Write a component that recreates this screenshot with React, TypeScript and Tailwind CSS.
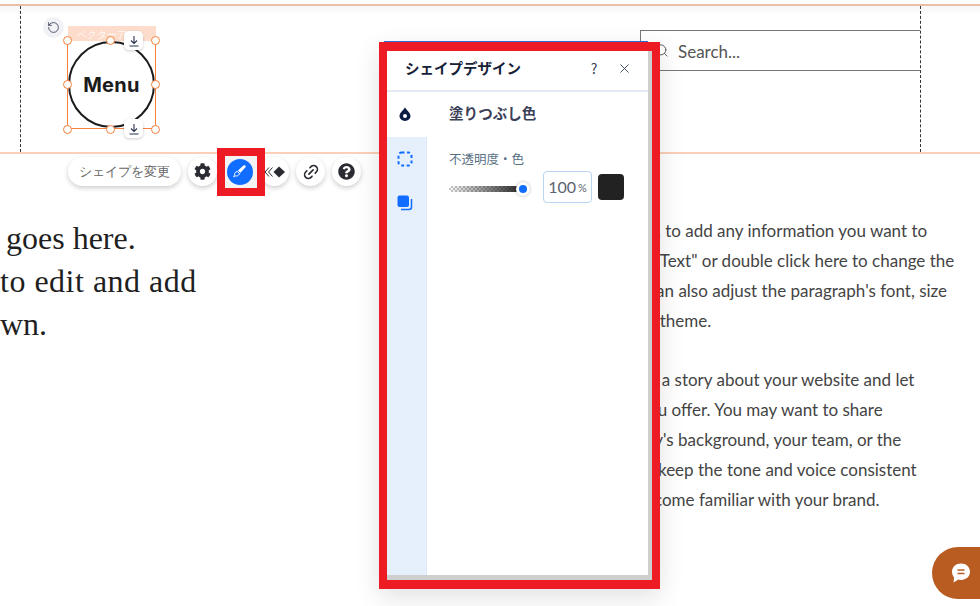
import { Link2, RotateCcw, Search, X } from "lucide-react";
import { FaCog, FaQuestionCircle } from "react-icons/fa";

const bodyLines = [
  { text: "e, to add any information you want to", indent: "" },
  { text: "t \"Text\" or double click here to change the", indent: "-ml-[5px]" },
  { text: "can also adjust the paragraph's font, size", indent: "" },
  { text: "s theme.", indent: "" },
];

const storyLines = [
  { text: "s a story about your website and let", indent: "pl-[2px]" },
  { text: "ou offer. You may want to share", indent: "" },
  { text: "ny's background, your team, or the", indent: "-ml-[3px]" },
  { text: "o keep the tone and voice consistent", indent: "-ml-[4px]" },
  { text: "come familiar with your brand.", indent: "pl-[6px]" },
];

const handles = [
  "left-[-5px] top-[-5px]",
  "left-[38px] top-[-5px]",
  "left-[83px] top-[-5px]",
  "left-[-5px] top-[39px]",
  "left-[83px] top-[39px]",
  "left-[-5px] top-[84px]",
  "left-[38px] top-[84px]",
  "left-[83px] top-[84px]",
];

function SaveIcon() {
  return (
    <svg width="12" height="12" viewBox="0 0 12 12" fill="none" stroke="#2b3350" strokeWidth="1.1">
      <path d="M6 1v7M3 5.500 6 8.500l3-3M1.500 11h9" />
    </svg>
  );
}

function SelectedShape() {
  return (
    <div className="absolute left-[67px] top-[40px] h-[89px] w-[89px] border border-[#f5813c]">
      <div className="absolute left-0 top-[-15px] flex h-[15px] w-[88px] items-center justify-center bg-[#fddccb] text-[10px] leading-none text-white/80">
        ベクターアート
      </div>
      <div className="flex h-full w-full items-center justify-center rounded-full border-2 border-[#1b1b1b] bg-white">
        <span className="[font-family:Inter,sans-serif] text-[20px] font-bold leading-none tracking-[0.3px] text-[#1b1b1b]">
          Menu
        </span>
      </div>
      {handles.map((h) => (
        <span key={h} className={`absolute h-[9px] w-[9px] rounded-full border-[1.5px] border-[#f5813c] bg-white ${h}`} />
      ))}
      <button className="absolute left-[-25px] top-[-24px] flex h-[21px] w-[21px] items-center justify-center rounded-full bg-[#f1f2f6] text-[#3b4057]">
        <RotateCcw size={13} strokeWidth={1.6} />
      </button>
      <span className="absolute left-[56px] top-[-10px] flex h-[19px] w-[19px] items-center justify-center rounded-[5px] bg-white shadow-[0_1px_3px_rgba(0,0,0,0.2)]">
        <SaveIcon />
      </span>
      <span className="absolute left-[56px] top-[78px] flex h-[19px] w-[19px] items-center justify-center rounded-[5px] bg-white shadow-[0_1px_3px_rgba(0,0,0,0.2)]">
        <SaveIcon />
      </span>
    </div>
  );
}

function Toolbar() {
  const round =
    "flex h-[29px] w-[29px] items-center justify-center rounded-full bg-white text-[#2b2b33] shadow-[0_2px_5px_rgba(0,0,0,0.2)]";
  return (
    <div className="absolute left-[68px] top-[157px] flex items-center gap-[7px]">
      <div className="flex h-[29px] w-[113px] items-center justify-center rounded-full bg-white text-[13px] text-[#666] shadow-[0_2px_5px_rgba(0,0,0,0.2)]">
        シェイプを変更
      </div>
      <button className={round}>
        <FaCog size={17} />
      </button>
      <button className={round}>
        <span />
      </button>
      <button className={round}>
        <svg width="22" height="12" viewBox="0 0 22 12">
          <path d="M5 1.500 1 6l4 4.500M8.500 1.500 4.500 6l4 4.500" fill="none" stroke="#2b2b33" strokeWidth="1" />
          <path d="M15 .500 21 6l-6 5.500L9.500 6Z" fill="#2b2b33" />
        </svg>
      </button>
      <button className={round}>
        <Link2 size={18} strokeWidth={2.2} className="-rotate-45" />
      </button>
      <button className={round}>
        <FaQuestionCircle size={17} />
      </button>
    </div>
  );
}

function BrushHighlight() {
  return (
    <div className="absolute left-[217px] top-[148px] h-[48px] w-[48px] border-[8px] border-[#ed1c24] bg-[#f3f3f3]">
      <div className="flex h-full w-full items-center justify-center pb-[1px] pr-[3px]">
        <span className="flex h-[26px] w-[26px] items-center justify-center rounded-full bg-[#116dff]">
          <svg width="15" height="15" viewBox="0 0 17 17">
            <path d="M15 1.600c.9.600.7 1.600 0 2.500L9.600 10 6.800 7.500 12.600 2c.8-.7 1.600-.9 2.400-.4Z" fill="#fff" />
            <path d="M6 8.300 8.900 11l-1.500 1.600c-1 1-2.300 1.200-3.400.9l-1.600 1.200-.6-.6L3 12.600c-.3-1.200 0-2.300 1-3.200Z" fill="none" stroke="#fff" strokeWidth="1.100" />
          </svg>
        </span>
      </div>
    </div>
  );
}

function DesignPanel() {
  return (
    <div className="absolute left-[379px] top-[41px] w-[281px]">
      <div className="ml-[5px] mr-[12px] h-[2px] bg-[#2f6fe0]" />
      <div className="-mt-px h-[547px] w-[281px] border-x-[8px] border-y-[9px] border-[#ed1c24] bg-[#cfcfcf] shadow-[0_8px_24px_rgba(0,0,0,0.12)]">
        <div className="flex h-[524px] w-[261px] flex-col bg-white [font-family:'Noto_Sans_CJK_JP',sans-serif]">
          <div className="flex h-[41px] shrink-0 items-center border-b-2 border-[#e4eaf3] pb-[5px] pl-[18px]">
            <span className="text-[14.500px] font-semibold text-[#162138]">シェイプデザイン</span>
            <span className="ml-[66px] w-[14px] text-center text-[14px] text-[#3b4057]">?</span>
            <X size={15} strokeWidth={1.4} className="ml-[16px] text-[#2b3350]" />
          </div>
          <div className="flex flex-1">
            <div className="flex w-[40px] shrink-0 flex-col">
              <div className="flex h-[45px] items-center justify-center pb-[2px] pr-[4px]">
                <svg width="12" height="14" viewBox="0 0 12 14">
                  <path d="M6 .500C8 3.500 11.500 6 11.500 9a5.500 5 0 0 1-11 0C.5 6 4 3.500 6 .5Z" fill="#0a1b45" />
                  <circle cx="6" cy="9" r="2" fill="#fff" />
                </svg>
              </div>
              <div className="flex flex-1 flex-col items-center border-r border-[#dceafb] bg-[#e6f0fd] pr-[3px] pt-[14px]">
                <svg width="16" height="16" viewBox="0 0 16 16">
                  <rect x="1.500" y="1.500" width="13" height="13" rx="3" fill="none" stroke="#116dff" strokeWidth="2" strokeDasharray="3 2.500" />
                </svg>
                <svg width="16" height="16" viewBox="0 0 16 16" className="mt-[28px]">
                  <rect x="0.500" y="0.500" width="11.500" height="11.500" rx="2" fill="#116dff" />
                  <path d="M14.500 4v8a2.500 2.500 0 0 1-2.500 2.500H4" fill="none" stroke="#116dff" strokeWidth="1.500" />
                </svg>
              </div>
            </div>
            <div className="flex-1 pl-[22px] pt-[11px]">
              <div className="text-[14.500px] font-semibold leading-[20px] text-[#3b4057]">塗りつぶし色</div>
              <div className="mt-[26px] text-[12.500px] leading-[20px] text-[#577083]">不透明度・色</div>
              <div className="mt-[2px] flex items-center">
                <div className="relative mt-[4px] h-[6px] w-[74px] rounded-full bg-[linear-gradient(90deg,transparent,#222),repeating-conic-gradient(#c4c4c4_0_25%,#fff_0_50%)] [background-size:auto,4px_4px]">
                  <span className="absolute right-[-7px] top-[-4px] flex h-[14px] w-[14px] items-center justify-center rounded-full bg-white shadow-[0_0_3px_rgba(0,0,0,0.3)]">
                    <span className="h-[8px] w-[8px] rounded-full bg-[#116dff]" />
                  </span>
                </div>
                <div className="ml-[20px] flex h-[32px] w-[49px] items-center justify-center rounded-[4px] border border-[#bcd5f7] text-[#5b6470]">
                  <span className="[font-family:Lato,sans-serif] text-[16px]">100</span>
                  <span className="ml-[2px] mt-[3px] [font-family:Lato,sans-serif] text-[11px]">%</span>
                </div>
                <div className="ml-[6px] h-[26px] w-[26px] rounded-[4px] bg-[#222]" />
              </div>
            </div>
          </div>
        </div>
      </div>
    </div>
  );
}

export default function App() {
  return (
    <div className="relative h-[606px] w-[980px] overflow-hidden bg-white">
      <header className="mt-[4px] h-[150px] border-y-2 border-t-[#e9bfa5] border-b-[#fbcfb8] bg-gradient-to-b from-[#f6f6f6] to-white to-[6%]">
        <div className="ml-[20px] mr-[59px] flex h-full items-start justify-end border-x border-dashed border-[#333]">
          <div className="mt-[24px] flex h-[41px] w-[280px] items-center border border-r-0 border-[#777] pl-[13px] [font-family:Lato,sans-serif] text-[17px] text-[#555]">
            <Search size={15} strokeWidth={1.5} />
            <span className="ml-[9px] pt-[3px]">Search...</span>
          </div>
        </div>
      </header>

      <main className="flex justify-between pt-[62px]">
        <div className="overflow-hidden whitespace-nowrap pt-[1px] [font-family:'Liberation_Serif',serif] text-[32px] leading-[43px] text-[#1f1f1f]">
          <div className="pl-[6px]">goes here.</div>
          <div className="tracking-[0.5px]">to edit and add</div>
          <div>wn.</div>
        </div>
        <div className="w-[332px] overflow-hidden whitespace-nowrap [font-family:Lato,sans-serif] text-[17px] leading-[30px] text-[#444]">
          {bodyLines.map((l) => (
            <div key={l.text} className={l.indent}>{l.text}</div>
          ))}
          <div className="h-[29px]" />
          {storyLines.map((l) => (
            <div key={l.text} className={l.indent}>{l.text}</div>
          ))}
        </div>
      </main>

      <SelectedShape />
      <Toolbar />
      <BrushHighlight />
      <DesignPanel />

      <button className="absolute bottom-[7px] right-0 flex h-[52px] w-[48px] items-center justify-center rounded-l-[26px] bg-[#b85c22] pl-[10px]">
        <svg width="22" height="22" viewBox="0 0 22 22">
          <path d="M11 1.500c5 0 9 3.500 9 8.300s-4 8.200-9 8.200c-1 0-1.800-.1-2.600-.4L3.500 20.500l.6-5C2.800 14 2 12 2 9.800 2 5 6 1.500 11 1.500Z" fill="#fff" />
          <path d="M7.500 8h7M7.500 11.500h7" stroke="#b85c22" strokeWidth="1.600" />
        </svg>
      </button>
    </div>
  );
}
